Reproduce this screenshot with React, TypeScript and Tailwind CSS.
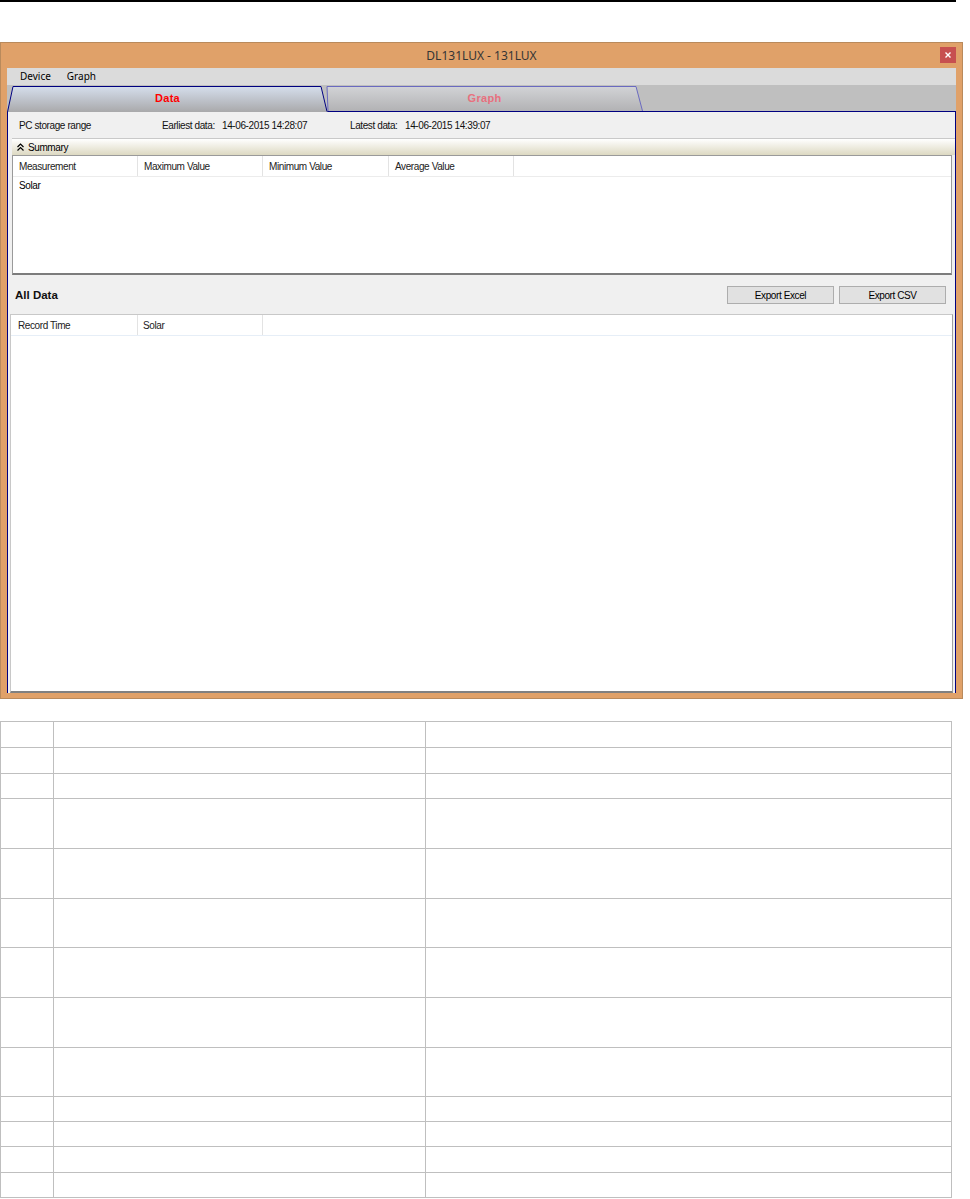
import React from 'react';

const rowHeights = [26, 26, 25, 50, 50, 49, 50, 50, 49, 25, 25, 26, 25];

const DoubleChevronUp = () => (
    <svg width="7" height="8" viewBox="0 0 7 8" className="block">
        <path d="M0.5 4 L3.5 1 L6.5 4" fill="none" stroke="#000" strokeWidth="1.2" />
        <path d="M0.5 7.5 L3.5 4.5 L6.5 7.5" fill="none" stroke="#000" strokeWidth="1.2" />
    </svg>
);

const DataTab = () => (
    <div className="relative z-10 w-[321px] h-[27px] flex items-center justify-center shrink-0">
        <svg width="321" height="27" viewBox="0 0 321 27" className="absolute inset-0">
            <defs>
                <linearGradient id="dataGrad" x1="0" y1="0" x2="0" y2="1">
                    <stop offset="0" stopColor="#d5deec" />
                    <stop offset="1" stopColor="#a9a9ab" />
                </linearGradient>
            </defs>
            <polygon points="0,27 6,1.5 314,1.5 320.5,27" fill="url(#dataGrad)" />
            <polyline points="0.5,27 6,1.5 314,1.5 320,26.5" fill="none" stroke="#000080" strokeWidth="1" />
        </svg>
        <span className="relative text-[11px] font-bold text-[#ff0000] tracking-[0.3px]">Data</span>
    </div>
);

const GraphTab = () => (
    <div className="relative -ml-[2px] w-[317px] h-[26px] flex items-center justify-center shrink-0">
        <svg width="317" height="26" viewBox="0 0 317 26" className="absolute inset-0">
            <defs>
                <linearGradient id="graphGrad" x1="0" y1="0" x2="0" y2="1">
                    <stop offset="0" stopColor="#d2d3d6" />
                    <stop offset="1" stopColor="#b2b2b4" />
                </linearGradient>
            </defs>
            <polygon points="1,1.5 310,1.5 316.5,26 2,26" fill="url(#graphGrad)" />
            <polyline points="2,26 1,1.5 310,1.5 316.5,26" fill="none" stroke="#6a6ac0" strokeWidth="1" />
        </svg>
        <span className="relative text-[11px] font-bold text-[#e8707e] tracking-[0.3px]">Graph</span>
    </div>
);

const App: React.FC = () => {
    return (
        <div className="w-[970px] h-[1199px] bg-white overflow-hidden font-['Liberation_Sans',Arial,sans-serif] text-black">
            <div className="h-[2px] w-[956px] bg-black" />
            <div className="h-[40px]" />

            {/* window */}
            <div className="w-[963px] h-[657px] bg-[#e0a169] border border-[#b98a5c] flex flex-col">
                <div className="relative h-[25px] flex items-center justify-center">
                    <span className="font-['Noto_Sans',sans-serif] text-[12px] text-[#353535] pt-[1px]">DL131LUX - 131LUX</span>
                    <div className="absolute right-[6px] top-[4px] w-[16px] h-[16px] bg-[#c75050] flex items-center justify-center">
                        <svg width="6" height="6" viewBox="0 0 6 6">
                            <path d="M0.5 0.5 L5.5 5.5 M5.5 0.5 L0.5 5.5" stroke="#fff" strokeWidth="1.4" />
                        </svg>
                    </div>
                </div>

                <div className="mx-[6px] mb-[5px] flex-1 flex flex-col">
                    {/* menu bar */}
                    <div className="h-[17px] bg-[#dbdbdb] flex items-center gap-[16px] pl-[13px] font-['Noto_Sans',sans-serif] text-[10px] text-black">
                        <span>Device</span>
                        <span>Graph</span>
                    </div>

                    {/* tab strip */}
                    <div className="h-[27px] bg-[#bfbfbf] flex items-end">
                        <div className="flex-1 h-[27px] flex border-b border-[#000080]">
                            <DataTab />
                            <GraphTab />
                        </div>
                    </div>

                    {/* panel */}
                    <div className="flex-1 bg-[#f0f0f0] border-l border-r border-[#000080] flex flex-col text-[10px] tracking-[-0.4px] whitespace-nowrap">
                        <div className="h-[26px] flex items-center pl-[11px] text-[#111]">
                            <span className="w-[143px]">PC storage range</span>
                            <span className="w-[60px]">Earliest data:</span>
                            <span className="w-[128px]">14-06-2015 14:28:07</span>
                            <span className="w-[55px]">Latest data:</span>
                            <span>14-06-2015 14:39:07</span>
                        </div>

                        <div className="ml-[4px] h-[17px] border-t border-[#c9c9c9] bg-gradient-to-b from-white to-[#ddd9c2] flex items-center pl-[5px] gap-[4px]">
                            <DoubleChevronUp />
                            <span>Summary</span>
                        </div>

                        <div className="ml-[4px] w-[940px] h-[120px] bg-white border-l border-t border-r border-[#9a9a9a] border-b-2 border-b-[#7c7c7c] flex flex-col">
                            <div className="h-[21px] flex border-b border-[#ececec] text-[#222]">
                                <div className="w-[125px] border-r border-[#e3e3e3] flex items-center pl-[6px]">Measurement</div>
                                <div className="w-[125px] border-r border-[#e3e3e3] flex items-center pl-[6px]">Maximum Value</div>
                                <div className="w-[126px] border-r border-[#e3e3e3] flex items-center pl-[6px]">Minimum Value</div>
                                <div className="w-[125px] border-r border-[#e3e3e3] flex items-center pl-[6px]">Average Value</div>
                                <div className="flex-1" />
                            </div>
                            <div className="h-[16px] flex items-center pl-[6px]">Solar</div>
                        </div>

                        <div className="h-[39px] flex items-start pt-[11px] pl-[7px] pr-[9px]">
                            <span className="text-[11.5px] tracking-normal font-bold text-[#111] pt-[1px]">All Data</span>
                            <div className="ml-auto flex gap-[5px]">
                                <button className="w-[107px] h-[18px] bg-[#e1e1e1] border border-[#adadad] text-[10px] text-black flex items-center justify-center">
                                    Export Excel
                                </button>
                                <button className="w-[107px] h-[18px] bg-[#e1e1e1] border border-[#adadad] text-[10px] text-black flex items-center justify-center">
                                    Export CSV
                                </button>
                            </div>
                        </div>

                        <div className="ml-[2px] mr-[2px] flex-1 bg-white border-l border-t border-[#c8c8c8] border-r border-r-[#a0a0a0] border-b-2 border-b-[#808080] flex flex-col">
                            <div className="h-[21px] flex border-b border-[#e6eef7] text-[#222]">
                                <div className="w-[127px] border-r border-[#e3e3e3] flex items-center pl-[7px]">Record Time</div>
                                <div className="w-[125px] border-r border-[#e3e3e3] flex items-center pl-[5px]">Solar</div>
                                <div className="flex-1" />
                            </div>
                        </div>
                    </div>
                </div>
            </div>

            <div className="h-[22px]" />

            {/* empty description table */}
            <table className="w-[952px] border-collapse table-fixed">
                <colgroup>
                    <col className="w-[53px]" />
                    <col className="w-[372px]" />
                    <col />
                </colgroup>
                <tbody>
                    {rowHeights.map((h, i) => (
                        <tr key={i} style={{ height: h }}>
                            <td className="border border-[#bfbfbf] p-0" />
                            <td className="border border-[#bfbfbf] p-0" />
                            <td className="border border-[#bfbfbf] p-0" />
                        </tr>
                    ))}
                </tbody>
            </table>
        </div>
    );
};

export default App;
